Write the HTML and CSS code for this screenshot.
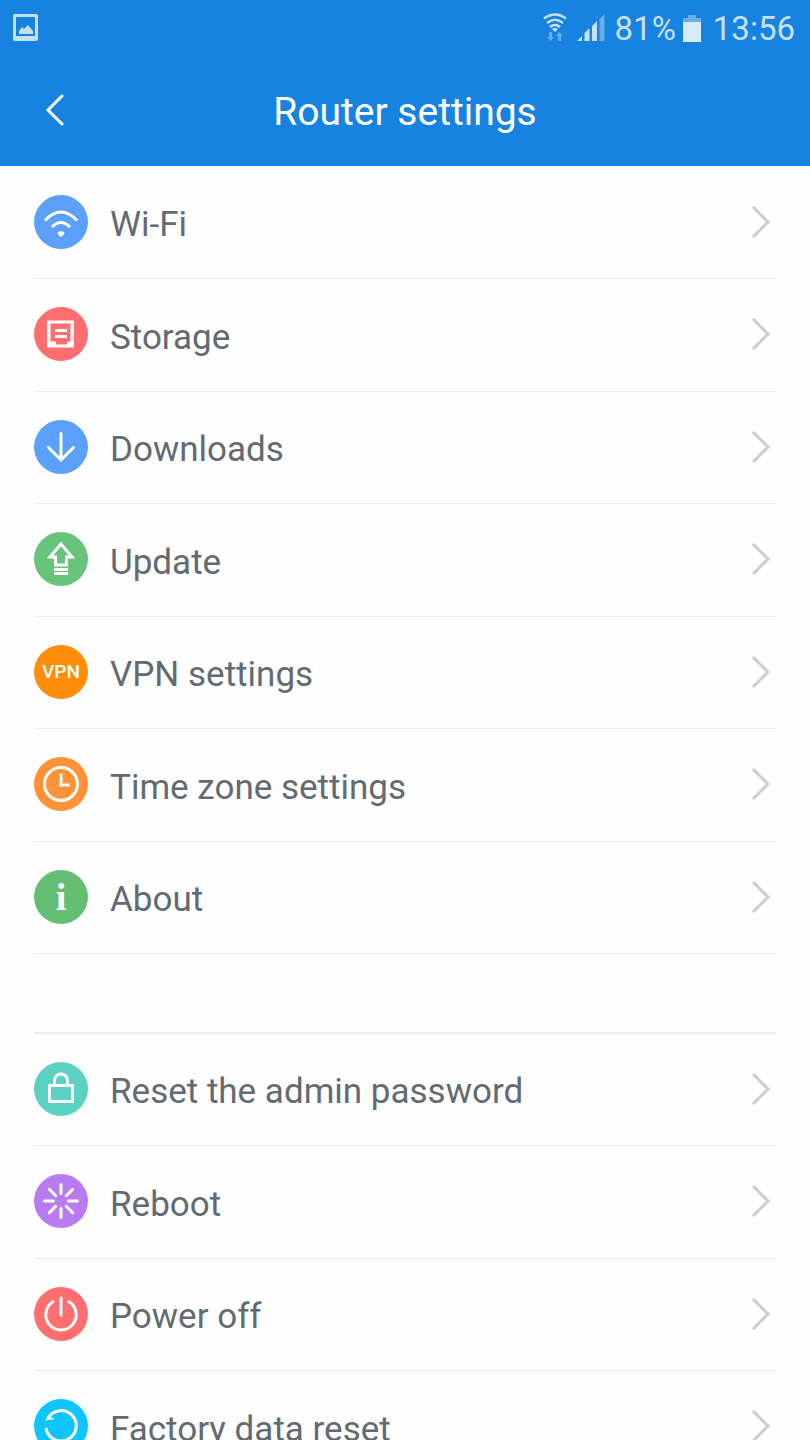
FILE: index.html
```html
<!DOCTYPE html>
<html lang="en">
<head>
    <meta charset="UTF-8">
    <meta name="viewport" content="width=device-width, initial-scale=1.0">
    <title>Router settings</title>
    <link rel="stylesheet" href="styles.css">
</head>
<body>
    <header class="header">
        <!-- Status bar -->
        <div class="status-bar">
            <svg class="picture-icon" width="26" height="28" viewBox="0 0 26 28">
                <path fill="#c5e1f8" fill-rule="evenodd" d="M2 0h21a2 2 0 0 1 2 2v23a2 2 0 0 1-2 2H2a2 2 0 0 1-2-2V2a2 2 0 0 1 2-2zM3 3v19h19V3z"/>
                <path fill="#c5e1f8" d="M6 20v-3l3-4 2 2 4-4 5 6v3z"/>
            </svg>
            <div class="status-right">
                <svg width="24" height="30" viewBox="0 0 24 30">
                    <g fill="none" stroke="#c5e1f8" stroke-width="2.4">
                        <path d="M1 5.500Q12-2.500 23 5.500"/>
                        <path d="M4 10Q12 3.500 20 10"/>
                        <path d="M7 14Q12 10 17 14"/>
                    </g>
                    <path fill="#c5e1f8" d="M9 16q3-2 6 0l-3 3z"/>
                    <path fill="#64aeea" d="M6 19h3v5h2l-3.500 4L4 24h2zM15 28h3v-5h2l-3.500-4-3.500 4h2z"/>
                </svg>
                <svg width="28" height="28" viewBox="0 0 28 28">
                    <path fill="#c5e1f8" d="M0 27l5-5v5zM7.500 27v-8l5-5v13zM15 27V12l5-5v20z"/>
                    <path fill="#64aeea" d="M22.500 27V5l5-5v27z"/>
                </svg>
                <span class="battery-text">81%</span>
                <svg class="battery-icon" width="18" height="27" viewBox="0 0 18 27">
                    <path fill="#64aeea" d="M0 3h5V0h8v3h5v4H0z"/>
                    <path fill="#d8ebfb" d="M0 7h18v20H0z"/>
                </svg>
                <span class="clock">13:56</span>
            </div>
        </div>

        <!-- Title bar -->
        <div class="title-bar">
            <button class="back-btn" type="button" aria-label="Back">
                <svg width="20" height="34" viewBox="0 0 20 34"><path d="M17 2L3 16l14 14"/></svg>
            </button>
            <h1 class="title">Router settings</h1>
        </div>
    </header>

    <main class="content">
        <ul class="menu">
            <li class="menu-row">
                <a class="menu-link" href="#wifi">
                    <svg class="icon blue" viewBox="0 0 54 54">
                        <path d="M11 25.500Q27 8.500 43 25.500M18 32Q27 23 36 32"/>
                        <path class="solid" d="M23.500 37.500q3.500-2.500 7 0 0 2-3.500 4.500-3.500-2.500-3.500-4.500z"/>
                    </svg>
                    <span class="label">Wi-Fi</span>
                    <svg class="arrow" viewBox="0 0 20 34"><path d="M2 2l15 15L2 32"/></svg>
                </a>
            </li>
            <li class="menu-row">
                <a class="menu-link" href="#storage">
                    <svg class="icon red" viewBox="0 0 54 54">
                        <path class="solid" fill-rule="evenodd" d="M14 13.500h25a1 1 0 0 1 1 1v25a1 1 0 0 1-1 1H14a1 1 0 0 1-1-1v-25a1 1 0 0 1 1-1zM16.500 16.500v18H22v3h11v-3h3.500v-18z"/>
                        <path class="solid" d="M21 22h12v3H21zM21 28h12v3H21z"/>
                    </svg>
                    <span class="label">Storage</span>
                    <svg class="arrow" viewBox="0 0 20 34"><path d="M2 2l15 15L2 32"/></svg>
                </a>
            </li>
            <li class="menu-row">
                <a class="menu-link" href="#downloads">
                    <svg class="icon blue" viewBox="0 0 54 54">
                        <path stroke-linecap="round" d="M27 13.500V40M14.500 27.500L27 40l12.500-12.500"/>
                    </svg>
                    <span class="label">Downloads</span>
                    <svg class="arrow" viewBox="0 0 20 34"><path d="M2 2l15 15L2 32"/></svg>
                </a>
            </li>
            <li class="menu-row">
                <a class="menu-link" href="#update">
                    <svg class="icon green" viewBox="0 0 54 54">
                        <path d="M27 12L16 25h5.500v8h11v-8H38zM20 37.500h14M20 41.500h14"/>
                    </svg>
                    <span class="label">Update</span>
                    <svg class="arrow" viewBox="0 0 20 34"><path d="M2 2l15 15L2 32"/></svg>
                </a>
            </li>
            <li class="menu-row">
                <a class="menu-link" href="#vpn">
                    <span class="icon vpn" aria-hidden="true">VPN</span>
                    <span class="label">VPN settings</span>
                    <svg class="arrow" viewBox="0 0 20 34"><path d="M2 2l15 15L2 32"/></svg>
                </a>
            </li>
            <li class="menu-row">
                <a class="menu-link" href="#timezone">
                    <svg class="icon orange" viewBox="0 0 54 54">
                        <circle cx="27" cy="27" r="16.500"/>
                        <path d="M27 16.500V28h8.500"/>
                    </svg>
                    <span class="label">Time zone settings</span>
                    <svg class="arrow" viewBox="0 0 20 34"><path d="M2 2l15 15L2 32"/></svg>
                </a>
            </li>
            <li class="menu-row">
                <a class="menu-link" href="#about">
                    <span class="icon info" aria-hidden="true">i</span>
                    <span class="label">About</span>
                    <svg class="arrow" viewBox="0 0 20 34"><path d="M2 2l15 15L2 32"/></svg>
                </a>
            </li>
        </ul>

        <ul class="menu system-menu">
            <li class="menu-row">
                <a class="menu-link" href="#password">
                    <svg class="icon teal" viewBox="0 0 54 54">
                        <path d="M15.500 23.500h23v16h-23zM20.500 23v-4.500a6.500 6.500 0 0 1 13 0V23"/>
                    </svg>
                    <span class="label">Reset the admin password</span>
                    <svg class="arrow" viewBox="0 0 20 34"><path d="M2 2l15 15L2 32"/></svg>
                </a>
            </li>
            <li class="menu-row">
                <a class="menu-link" href="#reboot">
                    <svg class="icon purple" viewBox="0 0 54 54">
                        <path stroke-linecap="round" d="M27 10.500v9M27 34.500v9M10.500 27h9M34.500 27h9M15.300 15.300l6.400 6.400M32.300 32.300l6.400 6.400M38.700 15.300l-6.400 6.400M21.700 32.300l-6.400 6.400"/>
                    </svg>
                    <span class="label">Reboot</span>
                    <svg class="arrow" viewBox="0 0 20 34"><path d="M2 2l15 15L2 32"/></svg>
                </a>
            </li>
            <li class="menu-row">
                <a class="menu-link" href="#power">
                    <svg class="icon red" viewBox="0 0 54 54">
                        <path stroke-linecap="round" d="M27 11v17M19 14.800a15.200 15.200 0 1 0 16 0"/>
                    </svg>
                    <span class="label">Power off</span>
                    <svg class="arrow" viewBox="0 0 20 34"><path d="M2 2l15 15L2 32"/></svg>
                </a>
            </li>
            <li class="menu-row">
                <a class="menu-link" href="#factory">
                    <svg class="icon cyan" viewBox="0 0 54 54">
                        <path d="M14 19A15.200 15.200 0 1 1 12 29"/>
                        <path class="solid" d="M11 21.500l4.500-6 1.500 3 4 1.500z"/>
                    </svg>
                    <span class="label">Factory data reset</span>
                    <svg class="arrow" viewBox="0 0 20 34"><path d="M2 2l15 15L2 32"/></svg>
                </a>
            </li>
        </ul>
    </main>
</body>
</html>
```
FILE: styles.css
```css
/* Basic Styling */
* { box-sizing: border-box; }
body {
    font-family: Roboto, "Liberation Sans", sans-serif;
    margin: 0;
    height: 100vh;
    display: flex;
    flex-direction: column;
    background-color: #fefefe;
}
svg { display: block; flex: none; }
/* Header */
.header {
    flex: none;
    background-color: #1782df;
    color: white;
}
.status-bar {
    height: 56px;
    padding: 0 15px 0 13px;
    display: flex;
    align-items: center;
    justify-content: space-between;
    color: #c5e1f8;
    font-size: 33px;
}
.status-right {
    display: flex;
    align-items: center;
    gap: 10px;
}
.battery-text { margin-right: -3px; }
.battery-icon { margin-right: 2px; }
.title-bar {
    height: 110px;
    padding: 0 34px;
    display: grid;
    grid-template-columns: 40px 1fr 40px;
    align-items: center;
}
.back-btn {
    height: 60px;
    padding: 0 0 0 11px;
    border: none;
    background: none;
    cursor: pointer;
}
.back-btn path {
    fill: none;
    stroke: white;
    stroke-width: 3;
    stroke-linecap: round;
}
.title {
    margin: 0;
    padding-top: 2px;
    font-size: 39px;
    font-weight: 400;
    text-align: center;
}
/* Settings List */
.content {
    flex: 1;
    min-height: 0;
    padding: 1px 34px 0;
    overflow-y: auto;
    scrollbar-width: none;
}
.menu {
    list-style: none;
    margin: 0;
    padding: 0;
}
.system-menu {
    margin-top: 78px;
    border-top: 2px solid #ececec;
}
.menu-row {
    height: 112px;
    border-bottom: 1px solid #ebebeb;
}
.menu-row:nth-child(even) { height: 113px; }
.menu-link {
    height: 100%;
    padding-bottom: 2px;
    display: flex;
    align-items: center;
    color: #636a72;
    text-decoration: none;
}
.label {
    flex: 1;
    padding: 6px 0 0 22px;
    font-size: 35px;
}
.arrow {
    width: 20px;
    height: 34px;
    margin-right: 5px;
    fill: none;
    stroke: #cccccc;
    stroke-width: 3;
}
/* Round Icons */
.icon {
    flex: none;
    width: 54px;
    height: 54px;
    border-radius: 50%;
    fill: none;
    stroke: white;
    stroke-width: 3;
}
.icon .solid { fill: white; stroke: none; }
.blue { background-color: #5ba0fa; }
.red { background-color: #ff6f70; }
.green { background-color: #68c47a; }
.orange { background-color: #ff9138; }
.teal { background-color: #5cd2c3; }
.purple { background-color: #b97cf0; }
.cyan { background-color: #10c5ff; }
.vpn, .info {
    display: flex;
    align-items: center;
    justify-content: center;
    color: white;
}
.vpn {
    background-color: #ff8d0a;
    font-size: 19px;
    font-weight: 500;
}
.info {
    background-color: #64bf74;
    font-family: "Liberation Serif", serif;
    font-size: 38px;
    font-weight: bold;
}
```
